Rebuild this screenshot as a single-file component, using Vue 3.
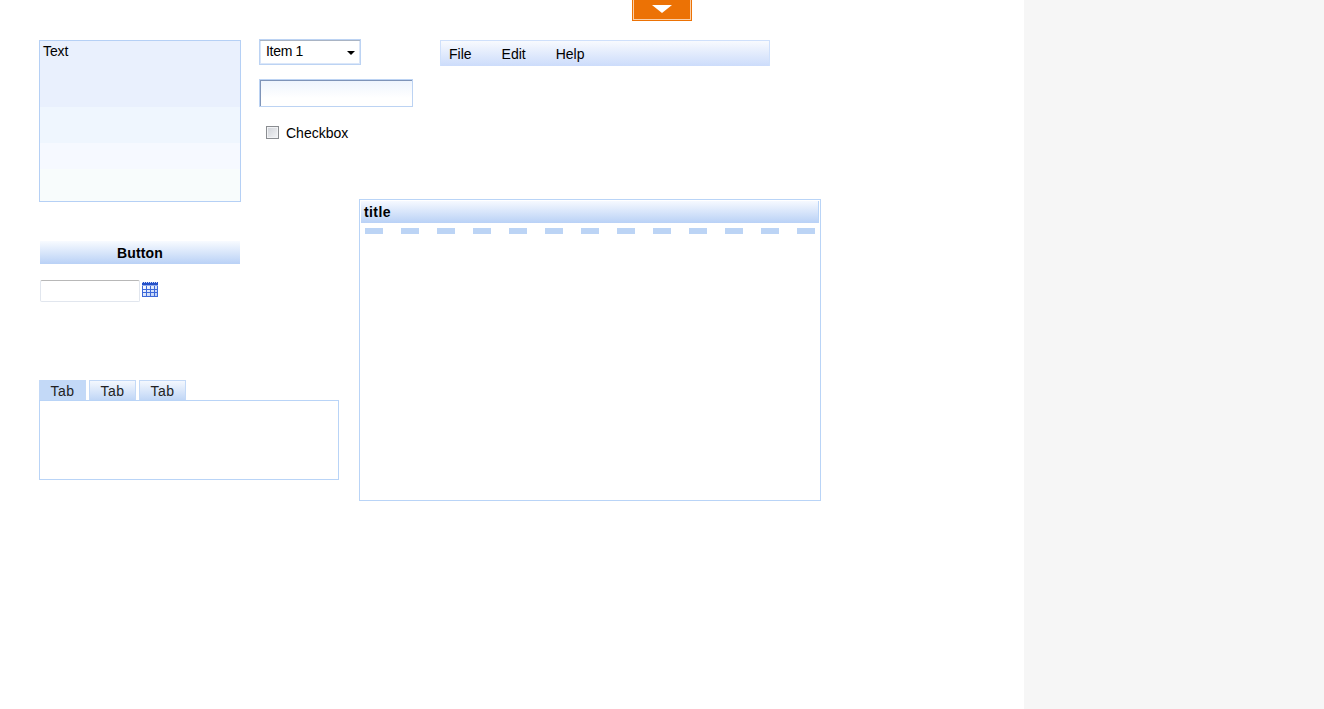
<script setup>
const menus = ['File', 'Edit', 'Help']
const tabs = ['Tab', 'Tab', 'Tab']
const calendarCols = [0, 4, 8, 12, 15]
const calendarRows = [7, 10, 14]
</script>

<template>
  <div class="page">
    <main class="canvas">
      <button class="drop-handle" aria-label="Open">
        <svg width="20" height="8" viewBox="0 0 20 8"><path d="M0 0H20L10 8Z" fill="#fff" /></svg>
      </button>

      <div class="listbox">Text</div>

      <div class="form-group">
        <div class="select">
          <span>Item 1</span>
          <i class="caret"></i>
        </div>
        <div class="textbox"></div>
        <label class="check">
          <span class="check-box"></span>
          <span>Checkbox</span>
        </label>
      </div>

      <nav class="menubar">
        <span v-for="m in menus" :key="m" class="menu-item">{{ m }}</span>
      </nav>

      <section class="panel">
        <h2 class="panel-title">title</h2>
        <div class="dashes"></div>
      </section>

      <div class="left-lower">
        <button class="wide-button">Button</button>
        <div class="date-row">
          <div class="date-input"></div>
          <svg class="calendar" width="16" height="15" viewBox="0 0 16 15">
            <defs>
              <linearGradient id="calCell" x1="0" y1="0" x2="1" y2="1">
                <stop offset="0" stop-color="#ffffff" />
                <stop offset="1" stop-color="#b7ccf6" />
              </linearGradient>
            </defs>
            <rect x="0" y="0" width="16" height="15" fill="#2450c8" />
            <path d="M0 .5H16" stroke="#c9d8f8" stroke-width="1" stroke-dasharray="1 1" />
            <rect x="0" y="3" width="16" height="1" fill="#8fa9ea" />
            <rect x="1" y="4" width="14" height="10" fill="url(#calCell)" />
            <rect v-for="c in calendarCols" :key="'c' + c" :x="c" y="4" width="1" height="11" fill="#3d68d8" />
            <rect v-for="r in calendarRows" :key="'r' + r" x="0" :y="r" width="16" height="1" fill="#3d68d8" />
          </svg>
        </div>
        <div class="tabs">
          <span v-for="(t, i) in tabs" :key="i" class="tab" :class="{ active: i === 0 }">{{ t }}</span>
        </div>
        <div class="tab-body"></div>
      </div>
    </main>
    <aside class="side"></aside>
  </div>
</template>

<style>
html, body { margin: 0; background: #fff; overflow: hidden; }
</style>

<style scoped>
.page {
  display: flex;
  width: 1324px;
  height: 709px;
  font-family: "Liberation Sans", Arial, sans-serif;
  font-size: 14px;
  color: #000;
}
.canvas {
  position: relative;
  box-sizing: border-box;
  width: 1024px;
  height: 709px;
  padding: 39px 0 0 39px;
  display: grid;
  grid-template-columns: 220px 100px 81px 381px;
  grid-template-rows: 159px 43px auto;
  align-content: start;
  align-items: start;
}
.side { width: 300px; background: #f6f6f6; }

.drop-handle {
  position: absolute;
  left: 632px;
  top: 0;
  box-sizing: border-box;
  width: 60px;
  height: 21px;
  padding: 5px 0 0;
  border: 1px solid #ec7205;
  border-top: 0;
  background: #ec7205;
  box-shadow: inset 1px 0 0 #fbd0a8, inset -1px 0 0 #fbd0a8, inset 0 -1px 0 #fbd0a8;
  display: flex;
  justify-content: center;
  align-items: flex-start;
}

.listbox {
  grid-column: 1;
  grid-row: 1 / 3;
  box-sizing: border-box;
  width: 202px;
  height: 162px;
  margin-top: 1px;
  padding: 3px;
  line-height: 15px;
  letter-spacing: -0.1px;
  border: 1px solid #b5d0f5;
  background: linear-gradient(
    #e9f0fd 0, #e9f0fd 66px,
    #eff6fe 66px, #eff6fe 102px,
    #f6f9ff 102px, #f6f9ff 128px,
    #f8fcfc 128px, #f8fcfc 100%);
}

.form-group {
  grid-column: 2 / 4;
  grid-row: 1;
  display: flex;
  flex-direction: column;
  align-items: flex-start;
}
.select {
  box-sizing: border-box;
  width: 102px;
  height: 26px;
  padding: 0 6px;
  border: 1px solid #bcd3f3;
  box-shadow: inset 0 1px 0 #a9b4c4, inset 1px 0 0 #d9e5f8, inset 0 -1px 0 #dbe7f9, inset -1px 0 0 #d9e5f8;
  display: flex;
  align-items: center;
  justify-content: space-between;
  line-height: 22px;
}
.select span { position: relative; top: -1px; letter-spacing: -0.3px; }
.caret {
  width: 0;
  height: 0;
  margin: 2px -1px 0 0;
  border-left: 4px solid transparent;
  border-right: 4px solid transparent;
  border-top: 4px solid #000;
}
.textbox {
  box-sizing: border-box;
  width: 154px;
  height: 28px;
  margin-top: 14px;
  border: 1px solid #bcd3f3;
  box-shadow: inset 0 1px 0 #7f94b8, inset 1px 0 0 #7f94b8;
  background: linear-gradient(#eef4fd, #fff 70%);
}
.check {
  display: flex;
  align-items: center;
  gap: 7px;
  margin: 17px 0 0 7px;
  line-height: 18px;
}
.check-box {
  box-sizing: border-box;
  width: 13px;
  height: 13px;
  margin-top: -2px;
  border: 1px solid #8a8d91;
  box-shadow: inset 0 0 0 1px #f2f3f5;
  background: linear-gradient(135deg, #cfd2d8, #f4f5f7);
}

.menubar {
  grid-column: 4;
  grid-row: 1;
  box-sizing: border-box;
  width: 330px;
  height: 26px;
  margin-top: 1px;
  padding: 0 0 0 8px;
  border: 1px solid #cfe0fb;
  border-bottom: 0;
  background: linear-gradient(#f8fafe, #ccdcfb);
  display: flex;
  gap: 30px;
  line-height: 26px;
}
.menu-item { display: block; }

.panel {
  grid-column: 3 / 5;
  grid-row: 2 / 4;
  box-sizing: border-box;
  width: 462px;
  height: 302px;
  margin-top: 1px;
  padding: 1px 1px 0;
  border: 1px solid #b9d4f7;
}
.panel-title {
  box-sizing: border-box;
  height: 22px;
  margin: 0;
  padding: 0 3px;
  font-size: 14px;
  font-weight: bold;
  line-height: 22px;
  letter-spacing: 0.4px;
  border-right: 1px solid #b9d4f7;
  background: linear-gradient(#f6f9ff, #b9d1f6);
}
.dashes {
  height: 6px;
  margin: 5px 3px 0 4px;
  background: repeating-linear-gradient(90deg, #bcd4f5 0, #bcd4f5 18px, transparent 18px, transparent 36px);
}

.left-lower {
  grid-column: 1 / 3;
  grid-row: 3;
  display: flex;
  flex-direction: column;
  align-items: flex-start;
}
.wide-button {
  box-sizing: border-box;
  width: 200px;
  height: 23px;
  margin-left: 1px;
  padding: 0;
  border: 0;
  font: bold 14px/24px "Liberation Sans", Arial, sans-serif;
  letter-spacing: 0.15px;
  color: #000;
  background: linear-gradient(#f8fbff, #b9d1f6);
}
.date-row {
  display: flex;
  align-items: flex-start;
  gap: 2px;
  margin: 16px 0 0 1px;
}
.date-input {
  box-sizing: border-box;
  width: 100px;
  height: 22px;
  border: 1px solid #e1e6ee;
  border-top-color: #b8b8b8;
  border-radius: 2px;
}
.calendar { display: block; margin-top: 2px; }
.tabs {
  display: flex;
  gap: 3px;
  margin-top: 78px;
}
.tab {
  box-sizing: border-box;
  width: 47px;
  height: 20px;
  border: 1px solid #c3d9f7;
  border-bottom: 0;
  background: linear-gradient(#f4f8fe, #c0d6f6);
  text-align: center;
  line-height: 21px;
  letter-spacing: 0.5px;
  color: #222;
}
.tab.active { background: #c3d9f7; }
.tab-body {
  box-sizing: border-box;
  width: 300px;
  height: 80px;
  border: 1px solid #b9d4f7;
}
</style>
